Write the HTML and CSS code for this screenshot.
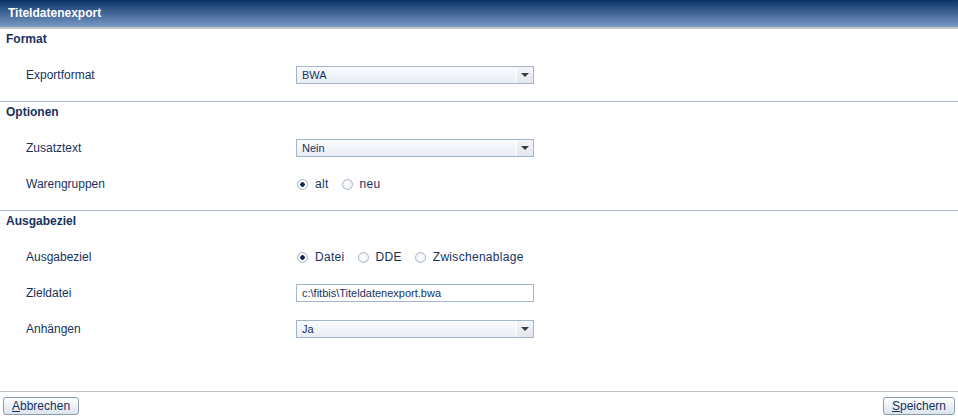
FILE: index.html
```html
<!DOCTYPE html>
<html lang="de">

<head>
    <meta charset="UTF-8">
    <meta name="viewport" content="width=device-width, initial-scale=1.0">
    <title>Titeldatenexport</title>
    <link rel="stylesheet" href="styles.css">
</head>

<body>
    <div class="window">
        <div class="titlebar">Titeldatenexport</div>

        <div class="content">
            <section class="group">
                <h3>Format</h3>
                <div class="row">
                    <label>Exportformat</label>
                    <div class="combo"><span class="value">BWA</span><span class="arrow"></span></div>
                </div>
            </section>

            <section class="group">
                <h3>Optionen</h3>
                <div class="row">
                    <label>Zusatztext</label>
                    <div class="combo"><span class="value">Nein</span><span class="arrow"></span></div>
                </div>
                <div class="row">
                    <label>Warengruppen</label>
                    <div class="radios">
                        <span class="radio checked">alt</span>
                        <span class="radio">neu</span>
                    </div>
                </div>
            </section>

            <section class="group">
                <h3>Ausgabeziel</h3>
                <div class="row">
                    <label>Ausgabeziel</label>
                    <div class="radios">
                        <span class="radio checked">Datei</span>
                        <span class="radio">DDE</span>
                        <span class="radio">Zwischenablage</span>
                    </div>
                </div>
                <div class="row">
                    <label>Zieldatei</label>
                    <div class="textbox">c:\fitbis\Titeldatenexport.bwa</div>
                </div>
                <div class="row">
                    <label>Anhängen</label>
                    <div class="combo"><span class="value">Ja</span><span class="arrow"></span></div>
                </div>
            </section>
        </div>

        <div class="footer">
            <button class="btn"><u>A</u>bbrechen</button>
            <button class="btn"><u>S</u>peichern</button>
        </div>
    </div>
</body>

</html>
```

FILE: styles.css
```css
*,
html {
    padding: 0;
    margin: 0;
    box-sizing: border-box;
}

body {
    font-family: "Liberation Sans", Arial, sans-serif;
    font-size: 12px;
    color: #17315e;
    background: #fff;
}

.window {
    width: 958px;
    height: 417px;
    display: flex;
    flex-direction: column;
}

.titlebar {
    height: 29px;
    padding: 6px 8px 0;
    color: #fff;
    font-weight: bold;
    background: linear-gradient(#0b3268, #7a9ac6);
    border-bottom: 2px solid #c4c4c4;
}

.content {
    flex: 1;
}

.group {
    padding-bottom: 8px;
    border-bottom: 1px solid #a9b9cf;
}

.group:last-child {
    border-bottom: none;
}

.group h3 {
    height: 20px;
    line-height: 20px;
    padding-left: 6px;
    font-size: 12px;
    margin-bottom: 8px;
}

.row {
    height: 36px;
    display: flex;
    align-items: center;
}

.row label {
    width: 296px;
    padding-left: 26px;
}

.combo {
    width: 238px;
    height: 18px;
    display: flex;
    border: 1px solid #a3b5cc;
    background: linear-gradient(#fafcfe, #e8eef5);
}

.combo .value {
    flex: 1;
    padding-left: 5px;
    line-height: 16px;
    font-size: 11px;
}

.combo .arrow {
    width: 17px;
    border-left: 1px solid #fff;
    background: linear-gradient(#f3f5f8, #e2e7ee);
    position: relative;
}

.combo .arrow::after {
    content: "";
    position: absolute;
    left: 4px;
    top: 6px;
    border-left: 4px solid transparent;
    border-right: 4px solid transparent;
    border-top: 4px solid #3a3a3a;
}

.textbox {
    width: 238px;
    height: 18px;
    border: 1px solid #a3b5cc;
    padding-left: 5px;
    line-height: 16px;
    font-size: 11px;
    background: #fff;
}

.radios {
    display: flex;
    gap: 13px;
    padding-left: 1px;
}

.radio {
    display: flex;
    align-items: center;
    gap: 7px;
    letter-spacing: 0.3px;
}

.radio::before {
    content: "";
    width: 9px;
    height: 9px;
    border-radius: 50%;
    border: 1px solid #a8b6c8;
    background: radial-gradient(#fff, #e8edf3);
}

.radio.checked::before {
    background: radial-gradient(circle, #14284f 0, #14284f 2px, #fff 2.5px, #e8edf3);
}

.footer {
    height: 26px;
    border-top: 1px solid #c2c2c2;
    display: flex;
    justify-content: space-between;
    align-items: flex-start;
    padding: 5px 3px 0;
}

.btn {
    height: 18px;
    padding: 0 8px;
    font-family: "Liberation Sans", Arial, sans-serif;
    font-size: 12px;
    color: #17315e;
    border: 1px solid #8c9cb3;
    border-radius: 3px;
    background: linear-gradient(#ffffff, #dbe3ed);
}
```
